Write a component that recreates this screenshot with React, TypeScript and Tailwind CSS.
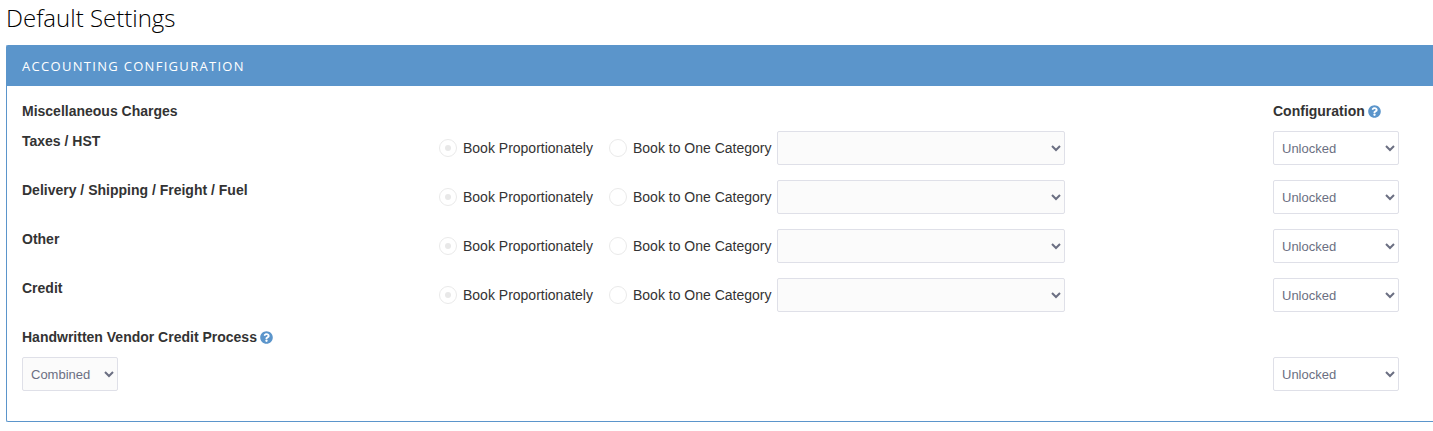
import { FaQuestionCircle } from 'react-icons/fa'
import clsx from 'clsx'

const CHARGES = [
  { id: 'taxes', label: 'Taxes / HST' },
  { id: 'delivery', label: 'Delivery / Shipping / Freight / Fuel' },
  { id: 'other', label: 'Other' },
  { id: 'credit', label: 'Credit' },
]

const ROW = 'grid grid-cols-[3fr_6fr_160px]'

const RADIO =
  'grid size-[18px] shrink-0 appearance-none place-items-center rounded-full border border-[#eaeaea] bg-white before:size-1.5 before:rounded-full checked:before:bg-[#e8e8e8]'

type SelectProps = {
  label: string
  options: string[]
  className: string
  disabled?: boolean
}

function Select({ label, options, className, disabled }: SelectProps) {
  return (
    <select
      aria-label={label}
      disabled={disabled}
      className={clsx(
        'h-[34px] rounded-xs border border-[#dfe0e8] px-1 text-[13px] text-[#6b6f82] disabled:opacity-100',
        disabled ? 'bg-[#fbfbfb]' : 'bg-white',
        className,
      )}
    >
      {options.map((o) => (
        <option key={o}>{o}</option>
      ))}
    </select>
  )
}

function HelpButton({ label }: { label: string }) {
  return (
    <button type="button" aria-label={label} className="text-[#5b95cb]">
      <FaQuestionCircle size={13} />
    </button>
  )
}

function ChargeRow({ id, label }: { id: string; label: string }) {
  return (
    <div className={`${ROW} mb-[15px]`}>
      <h3 className="font-bold">{label}</h3>
      <div role="radiogroup" aria-label={label} className="flex items-center">
        <label className="mr-4 flex items-center gap-1.5">
          <input type="radio" name={id} defaultChecked disabled className={RADIO} />
          Book Proportionately
        </label>
        <label className="mr-[5px] flex items-center gap-1.5">
          <input type="radio" name={id} disabled className={RADIO} />
          Book to One Category
        </label>
        <Select label={`${label} category`} options={['']} className="w-72" disabled />
      </div>
      <Select
        label={`${label} configuration`}
        options={['Unlocked', 'Locked']}
        className="w-[126px]"
      />
    </div>
  )
}

export default function App() {
  return (
    <main className="bg-white pb-2 pl-1.5 font-['Liberation_Sans',Arial,sans-serif] text-sm text-[#333]">
      <h1 className="pt-0.5 pb-[11px] font-['Open_Sans',sans-serif] text-2xl font-light text-black">
        Default Settings
      </h1>
      <section className="rounded-l-xs border border-r-0 border-[#5b95cb]">
        <h2 className="bg-[#5b95cb] px-[15px] py-2.5 font-['Open_Sans',sans-serif] text-[13px] leading-5 tracking-widest text-white uppercase">
          Accounting Configuration
        </h2>
        <div className="pt-[15px] pb-[30px] pl-[15px]">
          <div className={`${ROW} mb-2.5`}>
            <h3 className="col-span-2 font-bold">Miscellaneous Charges</h3>
            <h3 className="flex items-center gap-[3px] font-bold">
              Configuration
              <HelpButton label="About configuration" />
            </h3>
          </div>
          {CHARGES.map((c) => (
            <ChargeRow key={c.id} id={c.id} label={c.label} />
          ))}
          <h3 className="mb-2.5 flex items-center gap-[3px] font-bold">
            Handwritten Vendor Credit Process
            <HelpButton label="About handwritten vendor credit process" />
          </h3>
          <div className={ROW}>
            <div className="col-span-2">
              <Select
                label="Handwritten vendor credit process"
                options={['Combined', 'Separate']}
                className="w-24"
                disabled
              />
            </div>
            <Select
              label="Handwritten vendor credit configuration"
              options={['Unlocked', 'Locked']}
              className="w-[126px]"
            />
          </div>
        </div>
      </section>
    </main>
  )
}
